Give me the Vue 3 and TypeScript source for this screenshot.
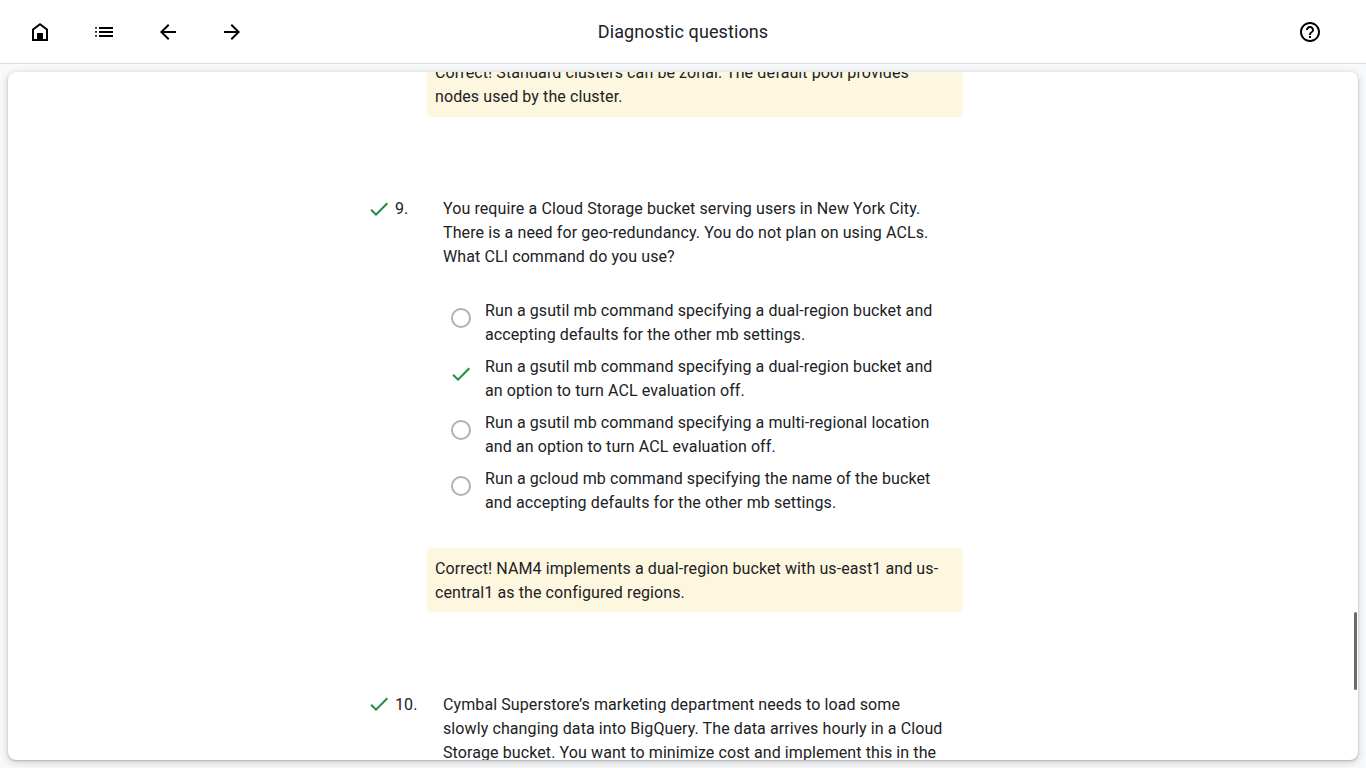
<script setup lang="ts">
interface Choice { text: string[]; picked?: boolean }
interface Question { id: number; stem: string[]; choices: Choice[]; feedback: string[] }

const previousFeedback: string[] = [
  'Correct! Standard clusters can be zonal. The default pool provides',
  'nodes used by the cluster.',
]

const questions: Question[] = [
  {
    id: 9,
    stem: [
      'You require a Cloud Storage bucket serving users in New York City.',
      'There is a need for geo-redundancy. You do not plan on using ACLs.',
      'What CLI command do you use?',
    ],
    choices: [
      { text: ['Run a gsutil mb command specifying a dual-region bucket and', 'accepting defaults for the other mb settings.'] },
      { text: ['Run a gsutil mb command specifying a dual-region bucket and', 'an option to turn ACL evaluation off.'], picked: true },
      { text: ['Run a gsutil mb command specifying a multi-regional location', 'and an option to turn ACL evaluation off.'] },
      { text: ['Run a gcloud mb command specifying the name of the bucket', 'and accepting defaults for the other mb settings.'] },
    ],
    feedback: ['Correct! NAM4 implements a dual-region bucket with us-east1 and us-', 'central1 as the configured regions.'],
  },
  {
    id: 10,
    stem: [
      'Cymbal Superstore’s marketing department needs to load some',
      'slowly changing data into BigQuery. The data arrives hourly in a Cloud',
      'Storage bucket. You want to minimize cost and implement this in the',
    ],
    choices: [],
    feedback: [],
  },
]
</script>

<template>
  <div class="page">
    <header class="bar">
      <nav class="nav">
        <button class="icon-btn" aria-label="Home">
          <svg viewBox="0 0 24 24"><path d="M12 3 4 9v12h16V9zm6 16h-3v-6H9v6H6v-9l6-4.5 6 4.5z" /><path d="M9 13h6v6H9z" /></svg>
        </button>
        <button class="icon-btn" aria-label="Outline">
          <svg viewBox="0 0 24 24"><path d="M3.2 7.1h1.6v1.6H3.2zM3.2 11.1h1.6v1.6H3.2zM3.2 15.1h1.6v1.6H3.2zM7 7h14v2H7zM7 11h14v2H7zM7 15h14v2H7z" /></svg>
        </button>
        <button class="icon-btn" aria-label="Previous">
          <svg viewBox="0 0 24 24"><path d="M20 11H7.83l5.59-5.59L12 4l-8 8 8 8 1.41-1.41L7.83 13H20z" /></svg>
        </button>
        <button class="icon-btn" aria-label="Next">
          <svg viewBox="0 0 24 24"><path d="m12 4-1.41 1.41L16.17 11H4v2h12.17l-5.58 5.59L12 20l8-8z" /></svg>
        </button>
      </nav>
      <h1 class="title">Diagnostic questions</h1>
      <button class="icon-btn help" aria-label="Help">
        <svg viewBox="0 0 24 24"><path d="M11 18h2v-2h-2zm1-16C6.48 2 2 6.48 2 12s4.48 10 10 10 10-4.48 10-10S17.52 2 12 2m0 18c-4.41 0-8-3.59-8-8s3.59-8 8-8 8 3.59 8 8-3.59 8-8 8m0-14c-2.21 0-4 1.79-4 4h2c0-1.1.9-2 2-2s2 .9 2 2c0 2-3 1.75-3 5h2c0-2.25 3-2.5 3-5 0-2.21-1.79-4-4-4" /></svg>
      </button>
    </header>

    <main class="card">
      <div class="column">
        <div class="feedback scrolled">
          <div v-for="line in previousFeedback" :key="line">{{ line }}</div>
        </div>
        <section v-for="q in questions" :key="q.id" class="question">
          <div class="heading">
            <svg class="check" viewBox="0 0 24 24"><path d="M9 16.17 4.83 12l-1.42 1.41L9 19 21 7l-1.41-1.41z" /></svg>
            <span class="number">{{ q.id }}.</span>
            <div class="stem">
              <div v-for="line in q.stem" :key="line">{{ line }}</div>
            </div>
          </div>
          <ul v-if="q.choices.length" class="choices">
            <li v-for="(c, i) in q.choices" :key="i" class="choice">
              <span class="marker">
                <svg v-if="c.picked" class="check" viewBox="0 0 24 24"><path d="M9 16.17 4.83 12l-1.42 1.41L9 19 21 7l-1.41-1.41z" /></svg>
                <span v-else class="radio"></span>
              </span>
              <div>
                <div v-for="line in c.text" :key="line">{{ line }}</div>
              </div>
            </li>
          </ul>
          <div v-if="q.feedback.length" class="feedback answer">
            <div v-for="line in q.feedback" :key="line">{{ line }}</div>
          </div>
        </section>
      </div>
      <div class="scroll-thumb"></div>
    </main>
  </div>
</template>

<style>
html, body { margin: 0; overflow: hidden; background: #f8f9fa; }
</style>

<style scoped>
.page {
  display: flex;
  flex-direction: column;
  height: 100vh;
  box-sizing: border-box;
  background: #f8f9fa;
  color: #202124;
  font: 16px/24px Roboto, sans-serif;
  white-space: nowrap;
}
.bar {
  display: grid;
  grid-template-columns: 1fr auto 1fr;
  align-items: center;
  flex: none;
  height: 64px;
  padding: 0 28px;
  box-sizing: border-box;
  background: #fff;
  border-bottom: 1px solid #dadce0;
}
.nav { display: flex; gap: 24px; }
.icon-btn {
  width: 40px;
  height: 24px;
  margin: 1px 0 0;
  padding: 0;
  border: 0;
  background: none;
  display: flex;
  align-items: center;
}
.icon-btn svg { width: 24px; height: 24px; fill: #000; }
.help { justify-self: end; width: 24px; margin-right: 16px; }
.title { margin: 0; font-size: 18px; font-weight: 400; line-height: 24px; letter-spacing: 0.1px; }
.card {
  position: relative;
  flex: 1;
  min-height: 0;
  margin: 8px;
  overflow: hidden;
  background: #fff;
  border-radius: 8px;
  box-shadow: 0 1px 2px rgba(60, 64, 67, 0.3), 0 2px 6px 2px rgba(60, 64, 67, 0.15);
}
.column { width: 600px; margin-left: 359px; letter-spacing: 0.1px; }
.feedback {
  width: 536px;
  height: 64px;
  margin-left: 60px;
  padding: 8px;
  box-sizing: border-box;
  background: #fef7e0;
  border-radius: 4px;
}
.scrolled { margin-top: -19px; }
.answer { padding-top: 9px; padding-bottom: 7px; }
.question { margin-top: 80px; }
.question + .question { margin-top: 81px; }
.heading { display: flex; }
.check { width: 24px; height: 24px; flex: none; fill: #1e8e3e; }
.question + .question .check { margin-top: -1px; }
.number { width: 48px; margin-left: 4px; }
.choices { list-style: none; margin: 30px 0 33px 84px; padding: 0; display: flex; flex-direction: column; gap: 8px; }
.choice { display: flex; }
.marker { width: 20px; height: 20px; margin: 9px 14px 0 0; }
.radio { display: block; width: 20px; height: 20px; box-sizing: border-box; border: 2px solid #b1b1b1; border-radius: 50%; }
.marker .check { display: block; margin: -2px; }
.scroll-thumb {
  position: absolute;
  top: 540px;
  right: 1px;
  width: 3px;
  height: 78px;
  border-radius: 2px;
  background: #6b6b6b;
}
</style>
